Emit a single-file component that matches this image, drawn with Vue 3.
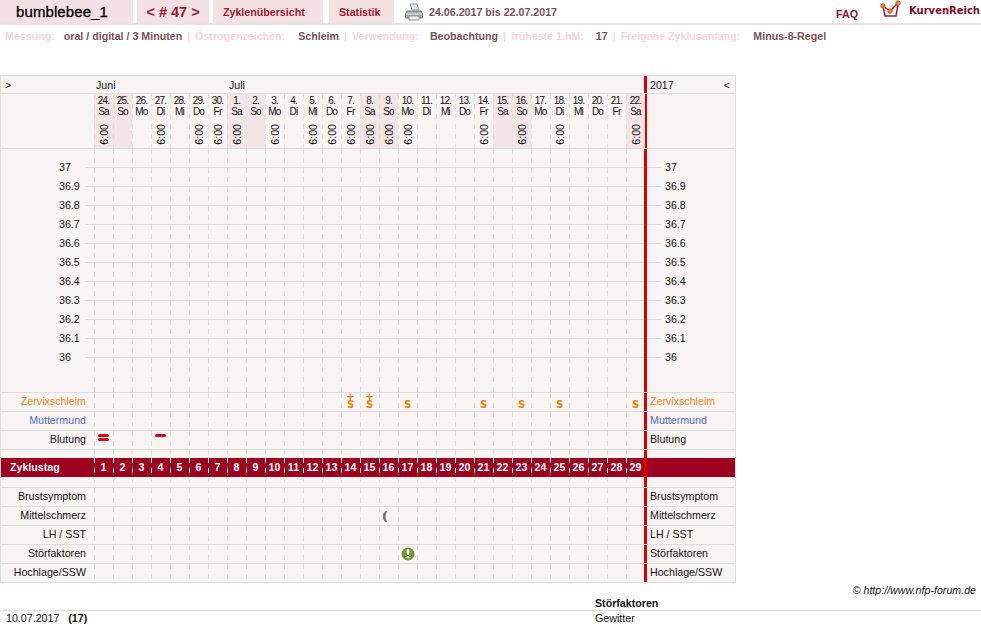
<script setup>
const weekdays = ['Sa', 'So', 'Mo', 'Di', 'Mi', 'Do', 'Fr']
const timed = [1, 4, 6, 7, 8, 10, 12, 13, 14, 15, 16, 17, 21, 23, 25, 29]

const days = Array.from({ length: 29 }, (_, i) => ({
  cycle: i + 1,
  date: i < 7 ? 24 + i : i - 6,
  weekday: weekdays[i % 7],
  weekend: i % 7 < 2,
  time: timed.includes(i + 1)
}))

const temps = ['37', '36.9', '36.8', '36.7', '36.6', '36.5', '36.4', '36.3', '36.2', '36.1', '36']
const mucus = { 14: true, 15: true, 17: false, 21: false, 23: false, 25: false, 29: false }
const bleeding = { 1: 2, 4: 1 }
const lowerRows = ['Brustsymptom', 'Mittelschmerz', 'LH / SST', 'Störfaktoren', 'Hochlage/SSW']

const meta = [
  { label: 'Messung:', value: 'oral / digital / 3 Minuten', gap: 9 },
  { label: 'Östrogenzeichen:', value: 'Schleim', gap: 13 },
  { label: 'Verwendung:', value: 'Beobachtung', gap: 11 },
  { label: 'früheste 1.hM:', value: '17', gap: 12 },
  { label: 'Freigabe Zyklusanfang:', value: 'Minus-8-Regel', gap: 13 }
]
</script>

<template>
  <div class="page">
    <header class="topbar">
      <div class="tab tab-name">bumblebee_1</div>
      <div class="tab tab-nav">&lt; # 47 &gt;</div>
      <div class="tab tab-link tab-overview">Zyklenübersicht</div>
      <div class="tab tab-link tab-stats">Statistik</div>
      <svg class="printer" width="18" height="18" viewBox="0 0 18 18">
        <path d="M5 1h7l2 6H7z" fill="#dfe6ee" stroke="#8c99a8" stroke-width="1" />
        <path d="M2 8h14l1.500 3v4H.5v-4z" fill="#a9aeb4" stroke="#75797e" stroke-width="1" />
        <path d="M1 11h16" stroke="#e4e6e8" stroke-width="1" />
        <path d="M4 13h10v4H4z" fill="#f2f2f2" stroke="#8b8f94" stroke-width="1" />
      </svg>
      <div class="dates">24.06.2017 bis 22.07.2017</div>
      <div class="faq">FAQ</div>
      <svg class="logo-icon" width="22" height="20" viewBox="0 0 22 20">
        <path d="M3 6l2 10h11l2-11" fill="#fff" stroke="#b0102c" stroke-width="1.400" />
        <path d="M3 6l7 5 8-8" fill="none" stroke="#b0102c" stroke-width="1.400" />
        <circle cx="3" cy="6" r="2.300" fill="#f08a1c" stroke="#c0302a" stroke-width=".6" />
        <circle cx="10" cy="11" r="2.300" fill="#f08a1c" stroke="#c0302a" stroke-width=".6" />
        <circle cx="18" cy="3" r="2.300" fill="#f08a1c" stroke="#c0302a" stroke-width=".6" />
      </svg>
      <div class="logo-text">KurvenReich</div>
    </header>

    <div class="meta">
      <template v-for="(item, i) in meta" :key="item.label">
        <span v-if="i" class="sep">|</span>
        <span class="meta-label" :style="{ marginRight: item.gap + 'px' }">{{ item.label }}</span>
        <span class="meta-value">{{ item.value }}</span>
      </template>
    </div>

    <div class="chart">
      <div class="row row-months">
        <div class="toggle">&gt;</div>
        <div class="month month-june">Juni</div>
        <div class="month month-july">Juli</div>
        <div class="side side-year"><span>2017</span><span>&lt;</span></div>
      </div>

      <div class="row row-days">
        <div></div>
        <div v-for="d in days" :key="d.cycle" class="cell day" :class="{ weekend: d.weekend }">
          <div class="day-date">{{ d.date }}.</div>
          <div class="day-name">{{ d.weekday }}</div>
          <div v-if="d.time" class="day-time">6:00</div>
        </div>
        <div class="side"></div>
      </div>

      <div class="row row-pad-top">
        <div></div>
        <div v-for="d in days" :key="d.cycle" class="cell"></div>
        <div class="side"></div>
      </div>
      <div v-for="t in temps" :key="t" class="row row-temp">
        <div class="temp-left">{{ t }}</div>
        <div v-for="d in days" :key="d.cycle" class="cell"></div>
        <div class="side temp-right">{{ t }}</div>
      </div>
      <div class="row row-pad-bottom">
        <div></div>
        <div v-for="d in days" :key="d.cycle" class="cell"></div>
        <div class="side"></div>
      </div>

      <div class="row row-obs">
        <div class="label-right orange">Zervixschleim</div>
        <div v-for="d in days" :key="d.cycle" class="cell mucus">
          <template v-if="d.cycle in mucus">
            <span v-if="mucus[d.cycle]">+</span>
            <span>S</span>
          </template>
        </div>
        <div class="side orange">Zervixschleim</div>
      </div>
      <div class="row row-obs">
        <div class="label-right blue">Muttermund</div>
        <div v-for="d in days" :key="d.cycle" class="cell"></div>
        <div class="side blue">Muttermund</div>
      </div>
      <div class="row row-obs">
        <div class="label-right">Blutung</div>
        <div v-for="d in days" :key="d.cycle" class="cell bleed">
          <i v-for="n in bleeding[d.cycle] || 0" :key="n"></i>
        </div>
        <div class="side">Blutung</div>
      </div>
      <div class="row row-gap-a">
        <div></div>
        <div v-for="d in days" :key="d.cycle" class="cell"></div>
        <div class="side"></div>
      </div>

      <div class="row row-band">
        <div class="band-title">Zyklustag</div>
        <div v-for="d in days" :key="d.cycle" class="cell band-cell">{{ d.cycle }}</div>
        <div class="side"></div>
      </div>

      <div class="row row-gap-b">
        <div></div>
        <div v-for="d in days" :key="d.cycle" class="cell"></div>
        <div class="side"></div>
      </div>

      <div v-for="name in lowerRows" :key="name" class="row row-obs">
        <div class="label-right">{{ name }}</div>
        <div v-for="d in days" :key="d.cycle" class="cell symbol">
          <svg v-if="name === 'Mittelschmerz' && d.cycle === 16" class="crescent" width="6" height="13" viewBox="0 0 6 13">
            <path d="M5.500 .5A6.200 6.200 0 0 0 5.500 12.500 11 11 0 0 1 5.500 .5z" fill="#77777a" />
          </svg>
          <svg v-if="name === 'Störfaktoren' && d.cycle === 17" class="alert" width="14" height="14" viewBox="0 0 14 14">
            <circle cx="7" cy="7" r="6.500" fill="#6a9a30" />
            <path d="M5.500 3.500a1.500 1.500 0 0 1 3 0L8 8H6z" fill="#fff" />
            <circle cx="7" cy="10.300" r="1.300" fill="#fff" />
          </svg>
        </div>
        <div class="side">{{ name }}</div>
      </div>
    </div>

    <div class="copyright"><span>©</span> <em>http://www.nfp-forum.de</em></div>

    <div class="notes">
      <div class="notes-head">
        <div></div>
        <strong>Störfaktoren</strong>
      </div>
      <div class="notes-row">
        <div>10.07.2017 <strong class="notes-day">(17)</strong></div>
        <div>Gewitter</div>
      </div>
    </div>
  </div>
</template>

<style>
html,
body {
  background: #fff;
}
</style>

<style scoped>
.page {
  width: 981px;
  font-family: "Liberation Sans", Arial, sans-serif;
  font-size: 10.67px;
  color: #111;
}

.topbar {
  display: flex;
  height: 25px;
  box-sizing: border-box;
  border-bottom: 2px solid #f3dfe2;
}

.tab {
  flex: none;
  background: #f3e1e3;
  display: flex;
  align-items: center;
}

.tab-name {
  width: 133px;
  padding-left: 16px;
  box-sizing: border-box;
  font-size: 15px;
  letter-spacing: 0.1px;
  color: #000;
  -webkit-text-stroke: 0.3px #000;
}

.tab-nav {
  width: 72px;
  margin-left: 4px;
  justify-content: center;
  font-size: 14.5px;
  font-weight: bold;
  color: #a0182e;
}

.tab-link {
  box-sizing: border-box;
  padding-left: 10px;
  font-weight: bold;
  color: #a0182e;
}

.tab-overview {
  width: 110px;
  margin-left: 4px;
}

.tab-stats {
  width: 65px;
  margin-left: 6px;
}

.printer {
  flex: none;
  margin: 3px 0 0 11px;
}

.dates {
  margin: 6px 0 0 6px;
  font-weight: bold;
  color: #7a5056;
  white-space: nowrap;
}

.faq {
  margin: 8px 0 0 auto;
  font-weight: bold;
  color: #8e1226;
}

.logo-icon {
  flex: none;
  margin-left: 22px;
}

.logo-text {
  margin: 5px 1px 0 7px;
  font-family: "DejaVu Sans", sans-serif;
  font-size: 10px;
  font-weight: bold;
  color: #7d0a1e;
}

.meta {
  display: flex;
  height: 50px;
  box-sizing: border-box;
  padding: 5px 0 0 5px;
  font-weight: bold;
  line-height: 13px;
  white-space: nowrap;
}

.meta-label {
  color: #fad4d6;
}

.meta-value {
  color: #7a5056;
}

.sep {
  color: #fad4d6;
  margin: 0 5px;
}

.chart {
  width: 736px;
  box-sizing: border-box;
  border: 1px solid #ddd;
  background: #f9f4f4;
}

.row {
  display: grid;
  grid-template-columns: 93px repeat(29, 19px) 1fr;
  box-sizing: border-box;
  border-bottom: 1px solid #ddd;
}

.side {
  margin-left: -1px;
  border-left: 3px solid #e00000;
  padding: 0 0 1px 3px;
  display: flex;
  align-items: center;
}

.cell {
  background: linear-gradient(#ddd 50%, transparent 50%) left top / 1px 10px repeat-y;
}

.row-months {
  height: 18px;
}

.toggle {
  display: flex;
  align-items: center;
  padding-left: 4px;
}

.month {
  display: flex;
  align-items: center;
  padding-left: 2px;
}

.month-june {
  grid-column: 2 / span 7;
}

.month-july {
  grid-column: 9 / span 22;
}

.side-year {
  justify-content: space-between;
  padding: 0 5px 0 3px;
}

.row-days {
  height: 55px;
}

.day {
  display: flex;
  flex-direction: column;
  align-items: center;
  padding-top: 2px;
  font-size: 10px;
  line-height: 10px;
  letter-spacing: -0.8px;
  position: relative;
}

.day.weekend {
  background: linear-gradient(#ddd 50%, transparent 50%) left top / 1px 10px repeat-y, #f3e4e6;
}

.day-name {
  margin-top: 1px;
}

.day-time {
  position: absolute;
  left: 5px;
  bottom: 3px;
  writing-mode: vertical-rl;
  transform: rotate(180deg);
  font-size: 10.67px;
  line-height: 11px;
  letter-spacing: 0;
}

.row-pad-top {
  height: 9px;
  border-bottom: 0;
}

.row-temp {
  height: 19px;
  border-bottom: 0;
  background: linear-gradient(#ddd, #ddd) 84px 9px / 576px 1px no-repeat;
}

.temp-left {
  padding: 0 0 1px 58px;
  display: flex;
  align-items: center;
}

.temp-right {
  padding-left: 18px;
}

.row-pad-bottom {
  height: 26px;
}

.row-obs {
  height: 19px;
}

.row-obs:last-child {
  height: 18px;
  border-bottom: 0;
}

.row-obs .side {
  padding-bottom: 3px;
}

.label-right {
  display: flex;
  align-items: center;
  justify-content: flex-end;
  padding: 0 8px 3px 0;
}

.orange {
  color: #f4860f;
}

.blue {
  color: #4f6cc9;
}

.mucus {
  display: flex;
  flex-direction: column;
  align-items: center;
  justify-content: flex-end;
  padding-bottom: 2px;
  font-family: "DejaVu Sans", sans-serif;
  font-size: 10px;
  font-weight: bold;
  line-height: 8px;
  color: #f08000;
}

.bleed {
  display: flex;
  flex-direction: column;
  align-items: center;
  gap: 1px;
  padding-top: 3px;
}

.bleed i {
  display: block;
  width: 11px;
  height: 3px;
  border-radius: 2px;
  background: #dc0014;
}

.row-gap-a {
  height: 8px;
  border-bottom: 0;
}

.row-band {
  height: 19px;
  border-bottom: 0;
  background: #9e0020;
  color: #fff;
  font-weight: bold;
}

.band-title {
  display: flex;
  align-items: center;
  padding: 0 0 1px 9px;
}

.band-cell {
  display: flex;
  align-items: center;
  justify-content: center;
  padding-bottom: 1px;
  background: linear-gradient(#fff 50%, transparent 50%) left top / 1px 10px repeat-y;
}

.row-gap-b {
  height: 11px;
}

.symbol {
  display: flex;
  align-items: center;
}

.crescent {
  margin-left: 3px;
}

.alert {
  margin-left: 3px;
}

.copyright {
  height: 14px;
  line-height: 14px;
  text-align: right;
  padding-right: 5px;
}

.notes-head,
.notes-row {
  display: grid;
  grid-template-columns: 595px 1fr;
}

.notes-head {
  height: 14px;
  box-sizing: border-box;
  line-height: 13px;
  border-bottom: 1px solid #ddd;
}

.notes-row {
  line-height: 14px;
}

.notes-row > div:first-child {
  padding-left: 6px;
}

.notes-day {
  margin-left: 6px;
}
</style>
